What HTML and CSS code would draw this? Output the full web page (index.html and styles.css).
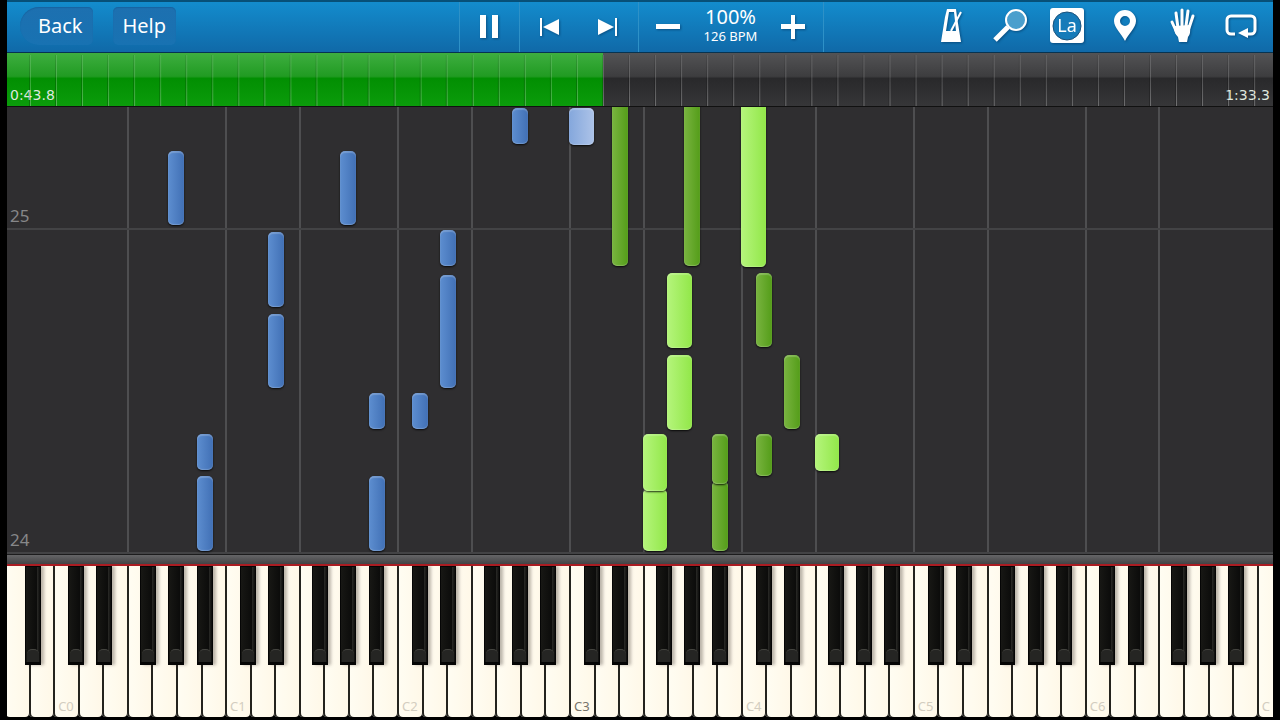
FILE: index.html
```html
<!DOCTYPE html>
<html lang="en">
<head>
    <meta charset="UTF-8">
    <meta name="viewport" content="width=device-width, initial-scale=1.0">
    <title>Piano Player</title>
    <link rel="stylesheet" href="styles.css">
</head>
<body>
    <div class="app">
        <header class="toolbar">
            <nav class="toolbar-left">
                <button class="text-button back-button">Back</button>
                <button class="text-button">Help</button>
            </nav>

            <div class="transport">
                <div class="group">
                    <button class="icon-button" aria-label="Pause">
                        <svg width="20" height="24" viewBox="0 0 20 24"><path d="M1 0h6v23H1zM13 0h6v23h-6z"/></svg>
                    </button>
                </div>
                <div class="group">
                    <button class="icon-button" aria-label="Previous">
                        <svg width="20" height="18" viewBox="0 0 20 18"><path d="M1 0h2v18H1zM20 1v16L4 9z"/></svg>
                    </button>
                    <button class="icon-button" aria-label="Next">
                        <svg width="20" height="18" viewBox="0 0 20 18"><path d="M17 0h2v18h-2zM0 1v16l16-8z"/></svg>
                    </button>
                </div>
                <div class="group tempo-group">
                    <button class="icon-button" aria-label="Slower">
                        <svg width="24" height="24" viewBox="0 0 24 24"><path d="M0 9h24v5H0z"/></svg>
                    </button>
                    <div class="tempo">
                        <span class="tempo-percent">100%</span>
                        <span class="tempo-bpm">126 BPM</span>
                    </div>
                    <button class="icon-button" aria-label="Faster">
                        <svg width="24" height="24" viewBox="0 0 24 24"><path d="M0 9h10V0h4v9h10v5H14v10h-4V14H0z"/></svg>
                    </button>
                </div>
            </div>

            <div class="tools">
                <button class="icon-button" aria-label="Metronome">
                    <svg width="36" height="36" viewBox="0 0 36 36">
                        <path fill-rule="evenodd" d="M14 1h9l1 8 4 25H8l4-25zM16 4l-3 19h10L21 4z"/>
                        <path class="stroke" d="M18 23L28 4" stroke-width="2"/>
                    </svg>
                </button>
                <button class="icon-button" aria-label="Zoom">
                    <svg width="36" height="36" viewBox="0 0 36 36">
                        <circle cx="25" cy="12" r="10" fill="#4b9fcd" stroke="#fff" stroke-width="2"/>
                        <path class="stroke" d="M17 19L4 32" stroke-width="5"/>
                    </svg>
                </button>
                <button class="icon-button" aria-label="Note labels">
                    <svg width="36" height="36" viewBox="0 0 36 36">
                        <rect x="1" y="0" width="34" height="35" rx="3"/>
                        <circle cx="18" cy="18" r="14" fill="#167bb9" stroke="#1b527c" stroke-width="1"/>
                        <text x="18" y="24" text-anchor="middle" font-size="18">La</text>
                    </svg>
                </button>
                <button class="icon-button" aria-label="Bookmark">
                    <svg width="36" height="36" viewBox="0 0 36 36">
                        <path fill-rule="evenodd" d="M18 33C15 26 7 20 7 13a11 11 0 0 1 22 0c0 7-8 13-11 20zM18 8a5 5 0 1 0 0 10a5 5 0 0 0 0-10z"/>
                    </svg>
                </button>
                <button class="icon-button" aria-label="Hands">
                    <svg width="36" height="36" viewBox="0 0 36 36">
                        <path class="stroke" d="M13 20L11 5M17 18V2M21 18L23 3M24 20L28 8M12 25L7 14" stroke-width="3" stroke-linecap="round"/>
                        <path d="M10 18l15-1q1 9-2 12l-1 5h-8l-1-5q-4-4-4-9z"/>
                    </svg>
                </button>
                <button class="icon-button" aria-label="Loop">
                    <svg width="36" height="36" viewBox="0 0 36 36">
                        <path class="stroke" d="M12 26H8a4 4 0 0 1-4-4V12a4 4 0 0 1 4-4h20a4 4 0 0 1 4 4v10a4 4 0 0 1-4 4h-4" stroke-width="3"/>
                        <path d="M15 25l10-5v10z"/>
                    </svg>
                </button>
            </div>
        </header>

        <div class="timeline">
            <progress class="progress" value="43.95" max="93.3" aria-label="Song position"></progress>
            <div class="times">
                <span>0:43.8</span>
                <span>1:33.3</span>
            </div>
        </div>

        <main class="roll">
            <div id="lanes" class="board lanes"></div>
            <div id="measures"></div>
            <div id="notes" class="board notes"></div>
        </main>

        <div class="rail"></div>

        <div class="piano">
            <div id="keys" class="board keys"></div>
        </div>
    </div>

    <script src="script.js"></script>
</body>
</html>
```
FILE: styles.css
```css
* {
    box-sizing: border-box;
}
body {
    margin: 0;
    background: #000;
    color: white;
    font-family: 'Trebuchet MS', 'Noto Sans', sans-serif;
}
.app {
    display: flex;
    flex-direction: column;
    height: 100vh;
    padding: 0 7px 3px;
    overflow: hidden;
}
button {
    font: inherit;
    color: inherit;
    border: none;
    background: none;
    padding: 0;
    cursor: pointer;
}
svg {
    display: block;
    fill: white;
    overflow: visible;
    filter: drop-shadow(1px 1px 1px rgba(0, 40, 80, 0.5));
}
.stroke {
    fill: none;
    stroke: white;
}

/* toolbar */
.toolbar {
    display: grid;
    grid-template-columns: 1fr auto 1fr;
    height: 53px;
    flex-shrink: 0;
    padding-left: 2px;
    background: linear-gradient(#138ccd, #1069a8);
    border-top: 2px solid #075078;
    border-bottom: 1px solid #073350;
}
.toolbar-left {
    display: flex;
    align-items: flex-start;
    gap: 20px;
    padding: 5px 11px;
}
.text-button {
    height: 38px;
    padding: 0 10px;
    border-radius: 5px;
    background: linear-gradient(#1d70b0, #1872b2);
    box-shadow: inset 0 1px 1px rgba(0, 50, 100, 0.2);
    font-size: 20px;
    line-height: 36px;
}
.back-button {
    padding-left: 18px;
    border-radius: 20px 5px 5px 20px;
}
.transport {
    display: flex;
    border-right: 1px solid #2e91c7;
}
.group {
    display: flex;
    align-items: center;
    border-left: 1px solid #2e91c7;
}
.group .icon-button {
    width: 59px;
}
.tempo {
    display: flex;
    flex-direction: column;
    align-items: center;
    width: 66px;
    padding-bottom: 4px;
}
.tempo-percent {
    font-size: 20px;
    line-height: 22px;
}
.tempo-bpm {
    font-size: 13px;
    line-height: 16px;
}
.icon-button {
    display: flex;
    align-items: center;
    justify-content: center;
    height: 46px;
}
.tools {
    display: flex;
    justify-content: flex-end;
    align-items: center;
    padding: 0 3px 2px 0;
}
.tools .icon-button {
    width: 58px;
}

/* timeline */
.timeline {
    position: relative;
    height: 54px;
    flex-shrink: 0;
    border-bottom: 1px solid #111;
}
.progress {
    display: block;
    width: 100%;
    height: 100%;
    border: none;
    appearance: none;
}
.progress::-webkit-progress-bar {
    background: linear-gradient(#535355, #3d3d3f 44%, #29292b 48%, #363638);
}
.progress::-webkit-progress-value {
    background: linear-gradient(#3eae40, #219b22 44%, #028f02 48%, #0b9c0b);
}
.timeline::after {
    content: '';
    position: absolute;
    inset: 2px 0 0;
    background: linear-gradient(to right, rgba(0, 0, 0, 0.25) 1px, rgba(255, 255, 255, 0.3) 1px, rgba(255, 255, 255, 0.3) 2px, transparent 2px) 22px 0 / calc(100% / 48.6) 100%;
    mask-image: linear-gradient(rgba(0, 0, 0, 0.4), black);
}
.times {
    position: absolute;
    inset: auto 3px 3px;
    display: flex;
    justify-content: space-between;
    font-family: 'DejaVu Sans', sans-serif;
    font-size: 14px;
    line-height: 16px;
    color: #dfe8df;
}

/* piano roll */
.roll {
    position: relative;
    flex: 1;
    overflow: hidden;
    background: #2f2e30;
}
/* the 88 keys run slightly past both edges of the window */
.board {
    width: 100.9%;
    margin-left: -3px;
}
.lanes {
    display: flex;
    height: 100%;
}
.lane {
    flex: 1;
}
.lane-line {
    box-shadow: inset 2px 0 #4e4e50;
}
.measure {
    position: absolute;
    left: 0;
    right: 0;
    padding-left: 3px;
    border-bottom: 2px solid #434345;
    font-size: 17px;
    line-height: 24px;
    color: #878789;
}
.notes {
    position: absolute;
    inset: 0 auto 0 0;
}
.note {
    position: absolute;
    border-radius: 5px;
    box-shadow: inset 0 2px 1px rgba(255, 255, 255, 0.2), inset 0 -1px 1px rgba(255, 255, 255, 0.2), 0 1px 2px rgba(0, 0, 0, 0.8);
}
.left-black {
    background: linear-gradient(to right, #5d8ed0, #4170b5);
}
.left-white {
    background: linear-gradient(to right, #84a7dc, #adc3e8);
}
.right-black {
    background: linear-gradient(to right, #79b440, #549d19);
}
.right-white {
    background: linear-gradient(to right, #b5f57c, #92e749);
}
.rail {
    height: 10px;
    flex-shrink: 0;
    border-top: 1px solid #1c1c1d;
    background: linear-gradient(#656567, #434345);
}

/* keyboard */
.piano {
    height: 153px;
    flex-shrink: 0;
    overflow: hidden;
    border-top: 2px solid #aa1c22;
}
.keys {
    display: flex;
    height: 100%;
}
.white-key {
    position: relative;
    display: flex;
    align-items: flex-end;
    flex: 1;
    padding: 0 0 2px 5px;
    border-radius: 0 0 4px 4px;
    background: linear-gradient(to right, #fffdf3, #fff8e8);
    box-shadow: inset 2px 0 #24231e;
    font-size: 13px;
    line-height: 18px;
    color: #d3cdc0;
}
.middle {
    color: #77736a;
}
.black-key {
    position: absolute;
    top: 0;
    z-index: 1;
    width: 65%;
    height: 99px;
    border: 1px solid #050505;
    border-bottom-width: 3px;
    background: linear-gradient(to right, #171714, #0c0c0b 75%, #292926 80%, #0c0c0b);
    box-shadow: 3px 0 3px rgba(60, 50, 40, 0.35);
}
.black-key::after {
    content: '';
    position: absolute;
    inset: auto 1px 0;
    height: 12px;
    border-top: 1px solid #44443f;
    border-radius: 5px 5px 0 0;
    background: #252523;
}
```
FILE: script.js
```js
const FIRST_KEY = 21;
const LAST_KEY = 108;
const WHITE_COUNT = 52;
const VISIBLE_TICKS = 447;

// left edge of every key in an octave, in white key widths
const KEY_OFFSETS = [0, 0.6, 1, 1.76, 2, 3, 3.53, 4, 4.68, 5, 5.84, 6];
const BLACK_WIDTH = 0.65;

// [key, start, length, hand]
const notes = [
    [32, 329, 74, 'left'], [44, 329, 74, 'left'],
    [39, 166, 74, 'left'], [39, 247, 75, 'left'],
    [51, 166, 113, 'left'], [51, 288, 36, 'left'],
    [46, 3, 75, 'left'], [46, 125, 36, 'left'],
    [49, 125, 36, 'left'],
    [34, 3, 75, 'left'], [34, 84, 36, 'left'],
    [56, 410, 36, 'left'], [60, 409, 37, 'left'],
    [63, 288, 170, 'right'], [68, 288, 170, 'right'], [72, 287, 171, 'right'],
    [67, 124, 75, 'right'], [67, 206, 75, 'right'],
    [65, 3, 62, 'right'], [65, 63, 57, 'right'],
    [70, 3, 70, 'right'], [70, 70, 50, 'right'],
    [73, 78, 42, 'right'], [73, 207, 74, 'right'],
    [75, 125, 74, 'right'], [77, 83, 37, 'right']
];
const measures = [[24, 0], [25, 324]];

const lanesEl = document.getElementById('lanes');
const measuresEl = document.getElementById('measures');
const notesEl = document.getElementById('notes');
const keysEl = document.getElementById('keys');

function isBlack(key) {
    return [1, 3, 6, 8, 10].includes(key % 12);
}

function keyPosition(key) {
    const octave = Math.floor((key - 24) / 12);
    return 2 + octave * 7 + KEY_OFFSETS[key % 12];
}

function addElement(parent, className, text = '') {
    const el = document.createElement('div');
    el.className = className;
    el.textContent = text;
    parent.appendChild(el);
    return el;
}

for (let key = FIRST_KEY; key <= LAST_KEY; key++) {
    if (isBlack(key)) continue;

    const step = key % 12;
    const hasLine = (step === 0 || step === 5) && key > 24 && key < LAST_KEY;
    addElement(lanesEl, hasLine ? 'lane lane-line' : 'lane');

    // only the first letter of the last label fits on screen
    const label = step === 0 ? (key === LAST_KEY ? 'C' : 'C' + (key / 12 - 2)) : '';
    const whiteKey = addElement(keysEl, key === 60 ? 'white-key middle' : 'white-key', label);

    if (key < LAST_KEY && isBlack(key + 1)) {
        const blackKey = addElement(whiteKey, 'black-key');
        blackKey.style.left = (keyPosition(key + 1) - keyPosition(key)) * 100 + '%';
    }
}

measures.forEach(([number, start]) => {
    const el = addElement(measuresEl, 'measure', number);
    el.style.bottom = start / VISIBLE_TICKS * 100 + '%';
});

notes.forEach(([key, start, length, hand]) => {
    const black = isBlack(key);
    const el = addElement(notesEl, `note ${hand}-${black ? 'black' : 'white'}`);
    el.style.left = keyPosition(key) / WHITE_COUNT * 100 + '%';
    el.style.width = (black ? BLACK_WIDTH : 1) / WHITE_COUNT * 100 + '%';
    el.style.bottom = start / VISIBLE_TICKS * 100 + '%';
    el.style.height = length / VISIBLE_TICKS * 100 + '%';
});
```
